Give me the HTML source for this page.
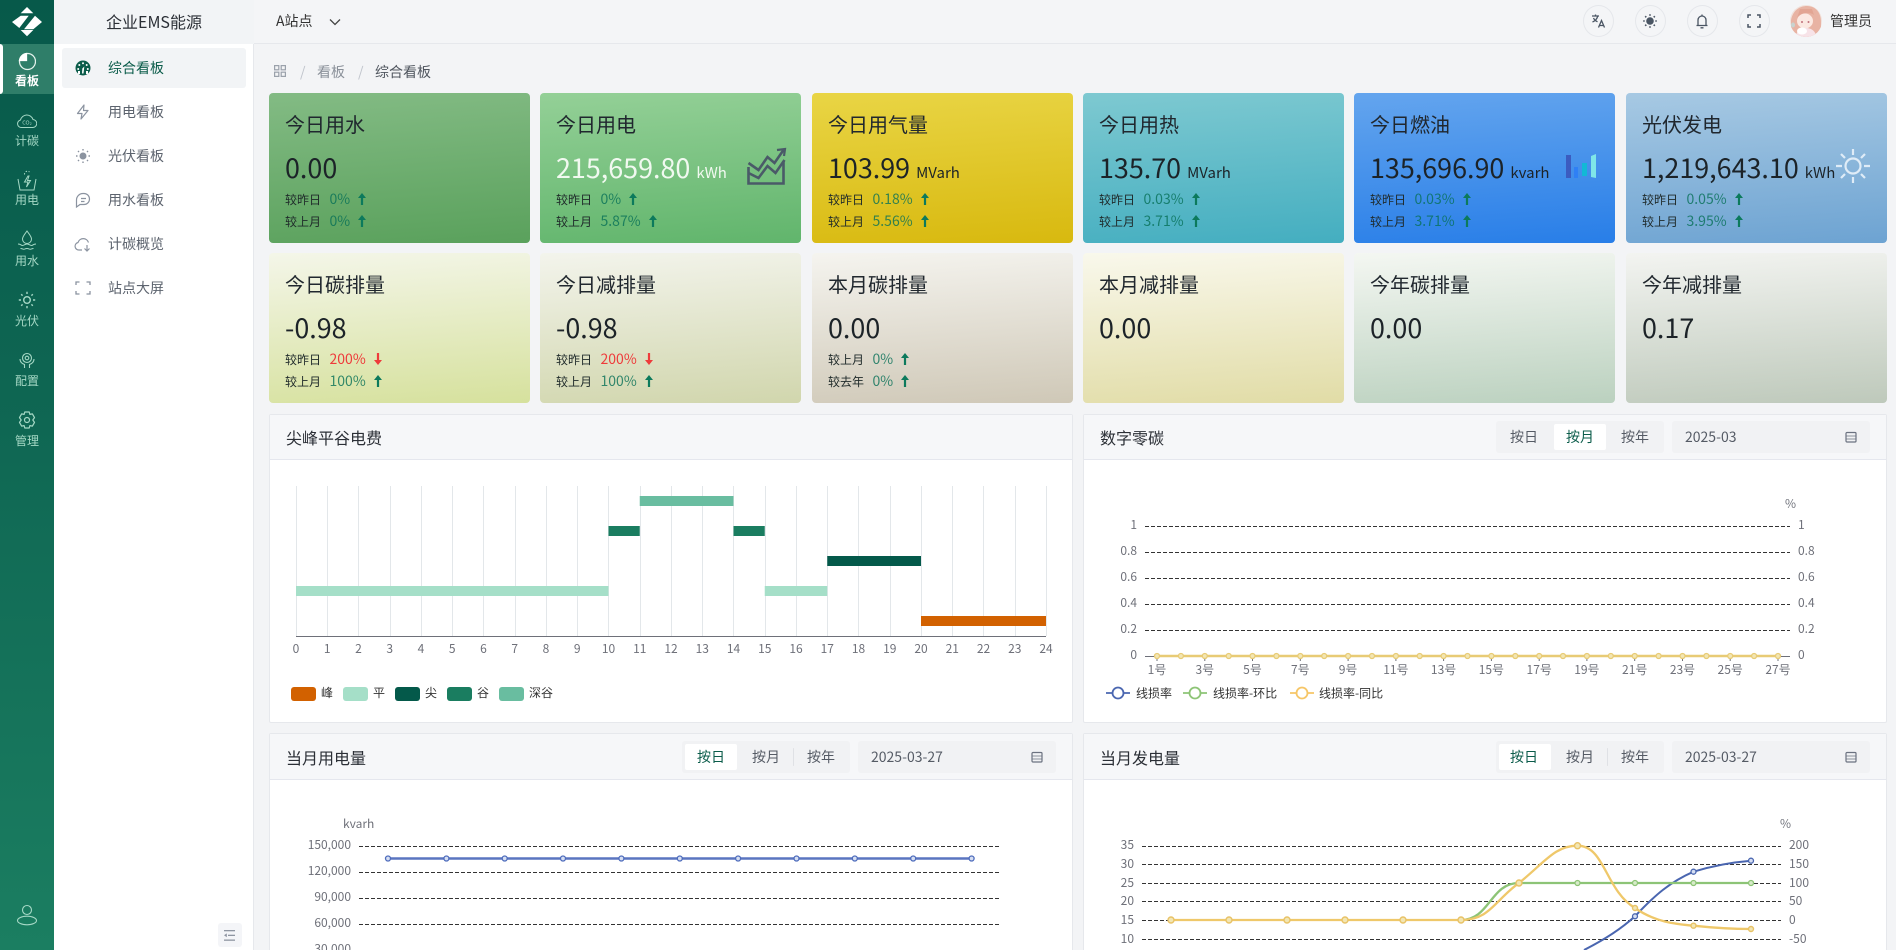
<!DOCTYPE html>
<html lang="zh-CN"><head><meta charset="utf-8"><title>企业EMS能源</title>
<style>
*{box-sizing:border-box;margin:0;padding:0}
html,body{width:1896px;height:950px;overflow:hidden;background:#f3f4f6;font-family:"Noto Sans CJK SC","Liberation Sans",sans-serif;color:#2b2f36}
#w{position:relative;width:1896px;height:950px;overflow:hidden}
.a{position:absolute;white-space:nowrap}
#rail{position:absolute;left:0;top:0;width:54px;height:950px;background:linear-gradient(180deg,#07594a 0%,#0f6753 45%,#1b7e61 100%)}
.ri{position:absolute;left:0;width:54px;text-align:center;font-size:12px;line-height:16px;color:#a5d8c5}
#sub{position:absolute;left:54px;top:0;width:200px;height:950px;background:#fff;border-right:1px solid #e6e8ec}
.mi{position:absolute;left:54px;font-size:14px;line-height:20px;color:#5c636e}
.c{position:absolute;width:261px;height:150px;border-radius:4px}
.t{position:absolute;left:16px;top:19px;font-size:20px;line-height:24px;color:#20272e;white-space:nowrap}
.v{position:absolute;left:16px;top:56px;font-size:26.9px;line-height:36px;color:#1c2328;white-space:nowrap}
.v small{font-size:15px;margin-left:6px}
.r{position:absolute;left:16px;height:20px;line-height:20px;font-size:12px;color:#1f2a2a;white-space:nowrap}
.r b{font-weight:400;font-size:14px;margin-left:8.5px;color:rgba(8,112,88,.8)}
.r b.d{color:#ee3b3b}
.r svg{margin-left:8px;vertical-align:-1px}
.p{position:absolute;background:#fff;border:1px solid #e6e8ec;border-radius:2px}
.ph{position:absolute;left:0;top:0;right:0;height:45px;background:#f6f7f9;border-bottom:1px solid #e5e7ee}
.pt{position:absolute;font-size:16px;line-height:24px;color:#2b2f36;white-space:nowrap}
.g{position:absolute;height:32px;width:168px;background:#f1f2f4;border-radius:3px}
.g i{position:absolute;top:3px;width:52px;height:26px;background:#fff;border-radius:2px}
.g span{position:absolute;top:0;line-height:33px;font-size:14px;color:#555b65;width:40px;text-align:center}
.g span.on{color:#0b5c4a}
.dt{position:absolute;width:198px;height:32px;background:#f1f2f4;border-radius:3px;line-height:33px;font-size:14px;color:#555b65;padding-left:13px}
.dt svg{position:absolute;left:173px;top:10px}
.hb{position:absolute;top:5px;width:31px;height:32px;border:1px solid #e5e7eb;border-radius:50%}
svg text{font-family:"Noto Sans CJK SC","Liberation Sans",sans-serif}
</style></head><body><div id="w">

<!-- top header -->
<div class="a" style="left:254px;top:0;width:1642px;height:44px;background:#f4f5f7;border-bottom:1px solid #e6e8ec"></div>
<div class="a" style="left:276px;top:11px;font-size:14px;line-height:20px;color:#333">A站点</div>
<svg class="a" style="left:328px;top:15px" width="14" height="14" viewBox="0 0 14 14" fill="none" stroke="#444" stroke-width="1.3"><path d="M2 4.5l5 5 5-5"/></svg>
<div class="hb" style="left:1583px"></div><div class="hb" style="left:1635px"></div><div class="hb" style="left:1687px"></div><div class="hb" style="left:1739px"></div>
<svg class="a" style="left:1590px;top:13px" width="16" height="16" viewBox="0 0 16 16" fill="none" stroke="#4a5563" stroke-width="1.3"><path d="M2 3h7M5.5 1.5V3M7.8 3C7 6 5 8 2.500 9M3.500 5c.8 1.800 2.200 3 4 3.800"/><path d="M8.500 14.500l3-7 3 7M9.500 12.500h4"/></svg>
<svg class="a" style="left:1642px;top:13px" width="16" height="16" viewBox="0 0 16 16" fill="#4a5563"><circle cx="8" cy="8" r="3.800"/><g stroke="#4a5563" stroke-width="1.600" stroke-dasharray="1.500 20"><path d="M8 1.200V4M8 14.800V12M1.200 8H4M14.800 8H12M3.200 3.200L5 5M12.800 12.800L11 11M12.800 3.200L11 5M3.200 12.800L5 11"/></g></svg>
<svg class="a" style="left:1694px;top:13px" width="16" height="16" viewBox="0 0 16 16" fill="none" stroke="#4a5563" stroke-width="1.300"><path d="M2.500 12.500h11M4 12.500V7a4 4 0 0 1 8 0v5.500M6.500 14.800h3"/><path d="M8 1.500V3"/></svg>
<svg class="a" style="left:1747px;top:14px" width="14" height="14" viewBox="0 0 14 14" fill="none" stroke="#4a5563" stroke-width="1.500"><path d="M1 4V1h3M10 1h3v3M13 10v3h-3M4 13H1v-3"/></svg>
<svg class="a" style="left:1790px;top:5px" width="32" height="32" viewBox="0 0 32 32"><defs><clipPath id="av"><circle cx="16" cy="16" r="16"/></clipPath></defs><g clip-path="url(#av)"><rect width="32" height="32" fill="#f1e2dc"/><path d="M1 32V15C3 5 10 1 17 1c9 0 14 7 14 16v15z" fill="#e8b3a3"/><ellipse cx="15" cy="16" rx="8" ry="7.500" fill="#fbe9e2"/><path d="M7 13c3-5 12-7 17-3l-2-6H10z" fill="#e2a593"/><circle cx="12" cy="17" r="1" fill="#c0707a"/><circle cx="18.500" cy="17" r="1" fill="#c0707a"/><path d="M6 32c0-6 5-9 10-9s10 3 10 9z" fill="#f7e3e8"/><ellipse cx="12" cy="26" rx="5" ry="3.500" fill="#fff"/><ellipse cx="3" cy="20" rx="2" ry="2.500" fill="#c9d3cf"/></g></svg>
<div class="a" style="left:1830px;top:11px;font-size:14px;line-height:20px;color:#333">管理员</div>

<!-- rail -->
<div id="rail"></div>
<svg class="a" style="left:0;top:0" width="54" height="44" viewBox="0 0 54 44" fill="#fff"><path d="M27 7l6.300 6.300H20.700zM20.700 30h12.600L27 36.300zM12 22l8.700-6.300h8L19.300 28zM42 22l-8.700 7.300H24l11-13.600z"/></svg>
<div class="a" style="left:0;top:44px;width:54px;height:50px;background:#2f7e69"></div>
<div class="a" style="left:0;top:44px;width:3px;height:50px;background:#fff;border-radius:0 3px 3px 0"></div>
<svg class="a" style="left:18px;top:51px" width="18" height="20" viewBox="0 0 18 20" fill="none" stroke="#e4f2ec" stroke-width="1.300"><circle cx="9.500" cy="10.500" r="8"/><path d="M1.500 9.500A8 8 0 0 1 8.500 2.500V9.500z" fill="#fff" stroke="#fff"/></svg>
<div class="ri" style="top:73px;color:#fff;font-weight:700">看板</div>

<svg class="a" style="left:17px;top:112px" width="20" height="17" viewBox="0 0 20 17" fill="none" stroke="#a5d8c5" stroke-width="1"><path d="M5 15.500H4.500A3.800 3.800 0 0 1 3.500 8 6.500 6.500 0 0 1 16 7.500 4 4 0 0 1 15.500 15.500z"/><text x="10" y="12.700" font-size="5.500" fill="#a5d8c5" stroke="none" text-anchor="middle">CO₂</text></svg>
<div class="ri" style="top:133px">计碳</div>
<svg class="a" style="left:17px;top:169px" width="20" height="22" viewBox="0 0 20 22" fill="none" stroke="#a5d8c5" stroke-width="1"><path d="M1 10l2 11h14l2-11"/><path d="M11 7L7.500 13H11l-1.500 5 4-6.500h-3L12 7z"/><path d="M7.500 5.500a3 3 0 0 1 5-2.500" stroke-dasharray="1.500 1.500"/></svg>
<div class="ri" style="top:192px">用电</div>
<svg class="a" style="left:17px;top:229px" width="20" height="22" viewBox="0 0 20 22" fill="none" stroke="#a5d8c5" stroke-width="1"><path d="M10 2c2.500 3.500 4.500 5.500 4.500 8a4.500 4.500 0 0 1-9 0c0-2.500 2-4.500 4.500-8z"/><path d="M1 15c3 0 3 1.500 4.500 1.500S8 15 10 15s3 1.500 4.500 1.500S16 15 19 15M3.500 19.500c2 0 2 .8 3.200 .8s1.500-.8 3.300-.8 2 .8 3.300.8 1.200-.8 3.200-.8"/></svg>
<div class="ri" style="top:253px">用水</div>
<svg class="a" style="left:18px;top:291px" width="18" height="18" viewBox="0 0 18 18" fill="none" stroke="#a5d8c5" stroke-width="1.400"><circle cx="9" cy="9" r="3.300"/><path d="M9 .8V3M9 15v2.200M.8 9H3M15 9h2.200M3.200 3.200l1.400 1.400M13.400 13.400l1.400 1.400M14.800 3.200l-1.400 1.400M4.600 13.400l-1.400 1.400"/></svg>
<div class="ri" style="top:313px">光伏</div>
<svg class="a" style="left:19px;top:352px" width="16" height="17" viewBox="0 0 16 17" fill="none" stroke="#a5d8c5" stroke-width="1.100"><circle cx="8" cy="6" r="4.500"/><circle cx="8" cy="6" r="1.800"/><path d="M1 7c0 4 3 5 4.500 5.500V16M15 7c0 4-3 5-4.500 5.500V16"/></svg>
<div class="ri" style="top:373px">配置</div>
<svg class="a" style="left:18px;top:411px" width="18" height="18" viewBox="0 0 18 18" fill="none" stroke="#a5d8c5" stroke-width="1.200"><path d="M6.800 1h4.400l.7 2.400 2.500-.5 2.100 3.700L14.800 9l1.700 2.400-2.100 3.700-2.500-.5-.7 2.400H6.800l-.7-2.400-2.500.5-2.100-3.700L3.200 9 1.500 6.600l2.100-3.700 2.500.5z" stroke-linejoin="round"/><circle cx="9" cy="9" r="2.500"/></svg>
<div class="ri" style="top:433px">管理</div>
<svg class="a" style="left:16px;top:904px" width="22" height="22" viewBox="0 0 22 22" fill="none" stroke="#a5d8c5" stroke-width="1.100"><circle cx="11" cy="6" r="4.500"/><ellipse cx="11" cy="16.500" rx="9.500" ry="4.300"/></svg>

<!-- sub menu -->
<div id="sub"></div>
<div class="a" style="left:54px;top:0;width:200px;height:44px;background:#f2f4f6;text-align:center;font-size:16px;line-height:43px;color:#2b2f36">企业EMS能源</div>
<div class="a" style="left:62px;top:48px;width:184px;height:40px;background:#f2f4f6;border-radius:3px"></div>
<svg class="a" style="left:75px;top:60px" width="16" height="16" viewBox="0 0 16 16"><circle cx="8" cy="8" r="7.500" fill="#0b5c4a"/><g fill="#fff"><circle cx="8" cy="3.300" r="1"/><circle cx="4.300" cy="5" r="1"/><circle cx="11.700" cy="5" r="1"/><circle cx="3.200" cy="9" r="1"/><circle cx="12.800" cy="9" r="1"/><path d="M7 13.500l.3-5 2-2-.8 7z"/><rect x="3" y="11" width="2" height="3"/><rect x="11" y="11" width="2" height="3"/></g></svg>
<div class="mi" style="left:108px;top:58px;color:#0b5c4a">综合看板</div>
<svg class="a" style="left:76px;top:104px" width="14" height="16" viewBox="0 0 14 16" fill="none" stroke="#8b93a0" stroke-width="1.200"><path d="M8 1L1.500 9.500H6L5 15l7-8.500H7.500z" stroke-linejoin="round"/></svg>
<div class="mi" style="left:108px;top:102px">用电看板</div>
<svg class="a" style="left:76px;top:149px" width="14" height="14" viewBox="0 0 14 14" fill="#8b93a0"><circle cx="7" cy="7" r="3.500"/><g stroke="#8b93a0" stroke-width="1.400"><path d="M7 0v1.500M7 12.500V14M0 7h1.500M12.500 7H14M2 2l1 1M11 11l1 1M12 2l-1 1M3 11l-1 1"/></g></svg>
<div class="mi" style="left:108px;top:146px">光伏看板</div>
<svg class="a" style="left:75px;top:192px" width="16" height="16" viewBox="0 0 16 16" fill="none" stroke="#8b93a0" stroke-width="1.200"><path d="M8 1.500h1a5.500 5.500 0 0 1 0 11H5L1.500 15V8A6.500 6.500 0 0 1 8 1.500z"/><path d="M6 6.500h5M6 9.500h3.500"/></svg>
<div class="mi" style="left:108px;top:190px">用水看板</div>
<svg class="a" style="left:74px;top:236px" width="18" height="16" viewBox="0 0 18 16" fill="none" stroke="#8b93a0" stroke-width="1.200"><path d="M8 14H5A3.800 3.800 0 0 1 4 6.500 5.500 5.500 0 0 1 14.500 6.500M13 9v5.500M10.500 12.500l2.500 2.500 2.500-2.500"/></svg>
<div class="mi" style="left:108px;top:234px">计碳概览</div>
<svg class="a" style="left:75px;top:281px" width="16" height="14" viewBox="0 0 16 14" fill="none" stroke="#8b93a0" stroke-width="1.300"><path d="M1 4V1h3.500M11.500 1H15v3M15 10v3h-3.500M4.500 13H1v-3"/></svg>
<div class="mi" style="left:108px;top:278px">站点大屏</div>
<div class="a" style="left:218px;top:923px;width:24px;height:24px;background:#f4f5f8;border-radius:3px"></div>
<svg class="a" style="left:224px;top:930px" width="12" height="11" viewBox="0 0 12 11" fill="#8e95a1"><rect width="11" height="1.300"/><rect y="9.500" width="11" height="1.300"/><rect x="4" y="4.700" width="7" height="1.300"/><path d="M0 5.300L2.800 3.400v3.800z"/></svg>

<!-- breadcrumb -->
<svg class="a" style="left:274px;top:65px" width="12" height="12" viewBox="0 0 12 12" fill="none" stroke="#9aa1ab" stroke-width="1.200"><rect x=".6" y=".6" width="4.200" height="4.200"/><rect x="7.200" y=".6" width="4.200" height="4.200"/><rect x=".6" y="7.200" width="4.200" height="4.200"/><rect x="7.200" y="7.200" width="4.200" height="4.200"/></svg>
<div class="a" style="left:300px;top:62px;font-size:14px;line-height:20px;color:#c0c4cc">/</div>
<div class="a" style="left:317px;top:62px;font-size:14px;line-height:20px;color:#8a9099">看板</div>
<div class="a" style="left:358px;top:62px;font-size:14px;line-height:20px;color:#c0c4cc">/</div>
<div class="a" style="left:375px;top:62px;font-size:14px;line-height:20px;color:#50565f">综合看板</div>

<!-- arrow symbols -->
<svg width="0" height="0" style="position:absolute"><defs>
<symbol id="up" viewBox="0 0 8 12"><path d="M4 0L8 5H5.100V12H2.900V5H0z" fill="#0c7a5c"/></symbol>
<symbol id="dn" viewBox="0 0 8 12"><path d="M4 12L0 7H2.900V0H5.100V7H8z" fill="#ee3b3b"/></symbol>
</defs></svg>

<!-- row 1 cards -->
<div class="c" style="left:269px;top:93px;background:linear-gradient(176deg,#83bb84,#5aa15c)">
<div class="t">今日用水</div><div class="v">0.00</div>
<div class="r" style="top:96px">较昨日<b>0%</b><svg width="8" height="12"><use href="#up"/></svg></div>
<div class="r" style="top:118px">较上月<b>0%</b><svg width="8" height="12"><use href="#up"/></svg></div></div>

<div class="c" style="left:540px;top:93px;background:linear-gradient(176deg,#94d097,#61b56c)">
<div class="t">今日用电</div><div class="v" style="color:#f1f9f0">215,659.80<small>kWh</small></div>
<div class="r" style="top:96px">较昨日<b>0%</b><svg width="8" height="12"><use href="#up"/></svg></div>
<div class="r" style="top:118px">较上月<b>5.87%</b><svg width="8" height="12"><use href="#up"/></svg></div>
<svg class="a" style="left:207px;top:54px" width="40" height="40" viewBox="0 0 40 40" fill="none" stroke="#4a5a68" stroke-width="2.600"><path d="M1.500 20v16.500h35V14"/><path d="M1.500 26l10 5 9-12 8 7 9-13"/><path d="M1.500 16l10 7 9-13 7 6 9-13"/><path d="M30 3l8-1-1 7" stroke-width="2.200"/></svg></div>

<div class="c" style="left:812px;top:93px;background:linear-gradient(176deg,#e9d545,#d8b90f)">
<div class="t">今日用气量</div><div class="v">103.99<small>MVarh</small></div>
<div class="r" style="top:96px">较昨日<b>0.18%</b><svg width="8" height="12"><use href="#up"/></svg></div>
<div class="r" style="top:118px">较上月<b>5.56%</b><svg width="8" height="12"><use href="#up"/></svg></div></div>

<div class="c" style="left:1083px;top:93px;background:linear-gradient(176deg,#7ec9d1,#44aec0)">
<div class="t">今日用热</div><div class="v">135.70<small>MVarh</small></div>
<div class="r" style="top:96px">较昨日<b>0.03%</b><svg width="8" height="12"><use href="#up"/></svg></div>
<div class="r" style="top:118px">较上月<b>3.71%</b><svg width="8" height="12"><use href="#up"/></svg></div></div>

<div class="c" style="left:1354px;top:93px;background:linear-gradient(176deg,#64a5ee,#287ee8)">
<div class="t">今日燃油</div><div class="v">135,696.90<small>kvarh</small></div>
<div class="r" style="top:96px">较昨日<b>0.03%</b><svg width="8" height="12"><use href="#up"/></svg></div>
<div class="r" style="top:118px">较上月<b>3.71%</b><svg width="8" height="12"><use href="#up"/></svg></div>
<svg class="a" style="left:212px;top:61px" width="30" height="25" viewBox="0 0 30 25"><rect x="0" y="1" width="5" height="23" fill="#3b5cc0"/><rect x="8" y="13" width="4" height="11" fill="#2f80f5"/><rect x="16" y="9" width="5" height="13" fill="#12b8d6"/><path d="M25 2l5-2v24l-5-1z" fill="#7fe6e8"/></svg></div>

<div class="c" style="left:1626px;top:93px;background:linear-gradient(176deg,#a7c9e3,#6da3d2)">
<div class="t">光伏发电</div><div class="v">1,219,643.10<small>kWh</small></div>
<div class="r" style="top:96px">较昨日<b>0.05%</b><svg width="8" height="12"><use href="#up"/></svg></div>
<div class="r" style="top:118px">较上月<b>3.95%</b><svg width="8" height="12"><use href="#up"/></svg></div>
<svg class="a" style="left:209px;top:55px" width="36" height="36" viewBox="0 0 36 36" fill="none" stroke="#dfecf7" stroke-width="2.200"><circle cx="18" cy="18" r="7.500"/><path d="M18 1v6M18 29v6M1 18h6M29 18h6M6 6l4 4M26 26l4 4M30 6l-4 4M10 26l-4 4"/></svg></div>

<!-- row 2 cards -->
<div class="c" style="left:269px;top:253px;background:linear-gradient(176deg,#f4f6e9,#d6e19d)">
<div class="t">今日碳排量</div><div class="v">-0.98</div>
<div class="r" style="top:96px">较昨日<b class="d">200%</b><svg width="8" height="12"><use href="#dn"/></svg></div>
<div class="r" style="top:118px">较上月<b>100%</b><svg width="8" height="12"><use href="#up"/></svg></div></div>

<div class="c" style="left:540px;top:253px;background:linear-gradient(176deg,#f3f4ec,#d1d6ad)">
<div class="t">今日减排量</div><div class="v">-0.98</div>
<div class="r" style="top:96px">较昨日<b class="d">200%</b><svg width="8" height="12"><use href="#dn"/></svg></div>
<div class="r" style="top:118px">较上月<b>100%</b><svg width="8" height="12"><use href="#up"/></svg></div></div>

<div class="c" style="left:812px;top:253px;background:linear-gradient(176deg,#f5f4ef,#cfc8b7)">
<div class="t">本月碳排量</div><div class="v">0.00</div>
<div class="r" style="top:96px">较上月<b>0%</b><svg width="8" height="12"><use href="#up"/></svg></div>
<div class="r" style="top:118px">较去年<b>0%</b><svg width="8" height="12"><use href="#up"/></svg></div></div>

<div class="c" style="left:1083px;top:253px;background:linear-gradient(176deg,#f9f8ec,#e1dca6)">
<div class="t">本月减排量</div><div class="v">0.00</div></div>

<div class="c" style="left:1354px;top:253px;background:linear-gradient(176deg,#f4f7f2,#bbd1bf)">
<div class="t">今年碳排量</div><div class="v">0.00</div></div>

<div class="c" style="left:1626px;top:253px;background:linear-gradient(176deg,#f3f4f1,#bec9bb)">
<div class="t">今年减排量</div><div class="v">0.17</div></div>

<!-- panels -->
<div class="p" style="left:269px;top:414px;width:804px;height:309px"><div class="ph"></div></div>
<div class="p" style="left:1083px;top:414px;width:804px;height:309px"><div class="ph"></div></div>
<div class="p" style="left:269px;top:733px;width:804px;height:230px"><div class="ph" style="height:46px"></div></div>
<div class="p" style="left:1083px;top:733px;width:804px;height:230px"><div class="ph" style="height:46px"></div></div>

<div class="pt" style="left:286px;top:425px">尖峰平谷电费</div>
<div class="pt" style="left:1100px;top:425px">数字零碳</div>
<div class="pt" style="left:286px;top:745px">当月用电量</div>
<div class="pt" style="left:1100px;top:745px">当月发电量</div>

<div class="g" style="left:1496px;top:421px"><i style="left:58px"></i><span style="left:8px">按日</span><span class="on" style="left:64px">按月</span><span style="left:119px">按年</span></div>
<div class="dt" style="left:1672px;top:421px">2025-03<svg width="12" height="12" viewBox="0 0 12 12" fill="none" stroke="#6b7280" stroke-width="1.200"><rect x="1" y="1.500" width="10" height="9.500" rx="1"/><path d="M1 5h10M1 8h10" stroke-width=".8"/></svg></div>

<div class="g" style="left:682px;top:741px"><i style="left:3px"></i><span class="on" style="left:9px">按日</span><span style="left:64px">按月</span><span style="left:119px">按年</span><i style="left:111px;top:7px;width:1px;height:18px;background:#dfe1e5"></i></div>
<div class="dt" style="left:858px;top:741px">2025-03-27<svg width="12" height="12" viewBox="0 0 12 12" fill="none" stroke="#6b7280" stroke-width="1.200"><rect x="1" y="1.500" width="10" height="9.500" rx="1"/><path d="M1 5h10M1 8h10" stroke-width=".8"/></svg></div>

<div class="g" style="left:1496px;top:741px"><i style="left:3px"></i><span class="on" style="left:8px">按日</span><span style="left:64px">按月</span><span style="left:119px">按年</span><i style="left:111px;top:7px;width:1px;height:18px;background:#dfe1e5"></i></div>
<div class="dt" style="left:1672px;top:741px">2025-03-27<svg width="12" height="12" viewBox="0 0 12 12" fill="none" stroke="#6b7280" stroke-width="1.200"><rect x="1" y="1.500" width="10" height="9.500" rx="1"/><path d="M1 5h10M1 8h10" stroke-width=".8"/></svg></div>

<!-- charts -->
<svg class="a" style="left:0;top:0" width="1896" height="950" viewBox="0 0 1896 950" font-size="12" fill="#6e7079">
<!-- chart 1 -->
<path stroke="#e3e7ea" stroke-width="1" fill="none" d="M296.500 486V636M327.500 486V636M358.500 486V636M390.500 486V636M421.500 486V636M452.500 486V636M483.500 486V636M515.500 486V636M546.500 486V636M577.500 486V636M608.500 486V636M640.500 486V636M671.500 486V636M702.500 486V636M733.500 486V636M765.500 486V636M796.500 486V636M827.500 486V636M858.500 486V636M890.500 486V636M921.500 486V636M952.500 486V636M983.500 486V636M1015.500 486V636M1046.500 486V636"/>
<path stroke="#6e7079" d="M296 636.500H1046"/>
<rect x="296" y="586" width="312.500" height="10" fill="#a5dfc8"/><rect x="764.750" y="586" width="62.500" height="10" fill="#a5dfc8"/>
<rect x="608.500" y="526" width="31.250" height="10" fill="#1a7d60"/><rect x="733.500" y="526" width="31.250" height="10" fill="#1a7d60"/>
<rect x="639.750" y="496" width="93.750" height="10" fill="#69bda0"/>
<rect x="827.250" y="556" width="93.750" height="10" fill="#04594a"/>
<rect x="921" y="616" width="125" height="10" fill="#d26100"/>
<g text-anchor="middle">
<text x="296" y="653">0</text><text x="327.250" y="653">1</text><text x="358.500" y="653">2</text><text x="389.750" y="653">3</text><text x="421" y="653">4</text><text x="452.250" y="653">5</text><text x="483.500" y="653">6</text><text x="514.750" y="653">7</text><text x="546" y="653">8</text><text x="577.250" y="653">9</text><text x="608.500" y="653">10</text><text x="639.750" y="653">11</text><text x="671" y="653">12</text><text x="702.250" y="653">13</text><text x="733.500" y="653">14</text><text x="764.750" y="653">15</text><text x="796" y="653">16</text><text x="827.250" y="653">17</text><text x="858.500" y="653">18</text><text x="889.750" y="653">19</text><text x="921" y="653">20</text><text x="952.250" y="653">21</text><text x="983.500" y="653">22</text><text x="1014.750" y="653">23</text><text x="1046" y="653">24</text>
</g>
<rect x="291" y="687" width="25" height="14" rx="3" fill="#d26100"/><rect x="343" y="687" width="25" height="14" rx="3" fill="#a5dfc8"/><rect x="395" y="687" width="25" height="14" rx="3" fill="#04594a"/><rect x="447" y="687" width="25" height="14" rx="3" fill="#1a7d60"/><rect x="499" y="687" width="25" height="14" rx="3" fill="#69bda0"/>
<g fill="#333"><text x="321" y="697">峰</text><text x="373" y="697">平</text><text x="425" y="697">尖</text><text x="477" y="697">谷</text><text x="529" y="697">深谷</text></g>

<!-- chart 2 -->
<path stroke="#333" stroke-dasharray="4 2" fill="none" d="M1145 526.500H1790M1145 552.500H1790M1145 578.500H1790M1145 604.500H1790M1145 630.500H1790"/>
<path stroke="#6e7079" d="M1145 656.500H1790M1157 656V661M1204.800 656V661M1252.500 656V661M1300.300 656V661M1348.100 656V661M1395.900 656V661M1443.600 656V661M1491.400 656V661M1539.200 656V661M1586.900 656V661M1634.700 656V661M1682.500 656V661M1730.200 656V661M1778 656V661"/>
<g text-anchor="end"><text x="1137" y="529">1</text><text x="1137" y="555">0.8</text><text x="1137" y="581">0.6</text><text x="1137" y="607">0.4</text><text x="1137" y="633">0.2</text><text x="1137" y="659">0</text></g>
<text x="1798" y="529">1</text><text x="1798" y="555">0.8</text><text x="1798" y="581">0.6</text><text x="1798" y="607">0.4</text><text x="1798" y="633">0.2</text><text x="1798" y="659">0</text>
<g text-anchor="middle"><text x="1157" y="674">1号</text><text x="1204.800" y="674">3号</text><text x="1252.500" y="674">5号</text><text x="1300.300" y="674">7号</text><text x="1348.100" y="674">9号</text><text x="1395.900" y="674">11号</text><text x="1443.600" y="674">13号</text><text x="1491.400" y="674">15号</text><text x="1539.200" y="674">17号</text><text x="1586.900" y="674">19号</text><text x="1634.700" y="674">21号</text><text x="1682.500" y="674">23号</text><text x="1730.200" y="674">25号</text><text x="1778" y="674">27号</text></g>
<path stroke="#e8cb75" stroke-width="2.500" d="M1157 656H1778"/>
<g fill="#f2e6b4" stroke="#e8cb75" stroke-width="1.300"><circle cx="1157" cy="656" r="2.500"/><circle cx="1180.900" cy="656" r="2.500"/><circle cx="1204.800" cy="656" r="2.500"/><circle cx="1228.700" cy="656" r="2.500"/><circle cx="1252.500" cy="656" r="2.500"/><circle cx="1276.400" cy="656" r="2.500"/><circle cx="1300.300" cy="656" r="2.500"/><circle cx="1324.200" cy="656" r="2.500"/><circle cx="1348.100" cy="656" r="2.500"/><circle cx="1372" cy="656" r="2.500"/><circle cx="1395.900" cy="656" r="2.500"/><circle cx="1419.700" cy="656" r="2.500"/><circle cx="1443.600" cy="656" r="2.500"/><circle cx="1467.500" cy="656" r="2.500"/><circle cx="1491.400" cy="656" r="2.500"/><circle cx="1515.300" cy="656" r="2.500"/><circle cx="1539.200" cy="656" r="2.500"/><circle cx="1563" cy="656" r="2.500"/><circle cx="1586.900" cy="656" r="2.500"/><circle cx="1610.800" cy="656" r="2.500"/><circle cx="1634.700" cy="656" r="2.500"/><circle cx="1658.600" cy="656" r="2.500"/><circle cx="1682.500" cy="656" r="2.500"/><circle cx="1706.400" cy="656" r="2.500"/><circle cx="1730.200" cy="656" r="2.500"/><circle cx="1754.100" cy="656" r="2.500"/><circle cx="1778" cy="656" r="2.500"/></g>
<text x="1785" y="508">%</text>
<g fill="#fff" stroke-width="1.800"><path stroke="#4a66b0" d="M1106 693H1130"/><circle cx="1118" cy="693" r="5.500" stroke="#4a66b0"/><path stroke="#8dc476" d="M1183 693H1207"/><circle cx="1195" cy="693" r="5.500" stroke="#8dc476"/><path stroke="#f6c667" d="M1290 693H1314"/><circle cx="1302" cy="693" r="5.500" stroke="#f6c667"/></g>
<g fill="#333"><text x="1136" y="697.500">线损率</text><text x="1213" y="697.500">线损率-环比</text><text x="1319" y="697.500">线损率-同比</text></g>

<!-- chart 3 -->
<text x="343" y="828">kvarh</text>
<path stroke="#333" stroke-dasharray="4 2" fill="none" d="M359 846.500H999M359 872.500H999M359 898.500H999M359 924.500H999M359 950.500H999"/>
<g text-anchor="end"><text x="351" y="849">150,000</text><text x="351" y="875">120,000</text><text x="351" y="901">90,000</text><text x="351" y="927">60,000</text><text x="351" y="953">30,000</text></g>
<path stroke="#5a75c0" stroke-width="2.500" d="M388 858.500H971.600"/>
<g fill="#d5def2" stroke="#4e6cbc" stroke-width="1.300"><circle cx="388" cy="858.500" r="2.500"/><circle cx="446.400" cy="858.500" r="2.500"/><circle cx="504.700" cy="858.500" r="2.500"/><circle cx="563" cy="858.500" r="2.500"/><circle cx="621.400" cy="858.500" r="2.500"/><circle cx="679.800" cy="858.500" r="2.500"/><circle cx="738.100" cy="858.500" r="2.500"/><circle cx="796.500" cy="858.500" r="2.500"/><circle cx="854.800" cy="858.500" r="2.500"/><circle cx="913.200" cy="858.500" r="2.500"/><circle cx="971.600" cy="858.500" r="2.500"/></g>

<!-- chart 4 -->
<text x="1780" y="828">%</text>
<path stroke="#333" stroke-dasharray="4 2" fill="none" d="M1142 846.500H1781M1142 864.500H1781M1142 883.500H1781M1142 901.500H1781M1142 920.500H1781M1142 939.500H1781"/>
<g text-anchor="end"><text x="1134" y="849">35</text><text x="1134" y="868">30</text><text x="1134" y="887">25</text><text x="1134" y="905">20</text><text x="1134" y="924">15</text><text x="1134" y="943">10</text></g>
<text x="1789" y="849">200</text><text x="1789" y="868">150</text><text x="1789" y="887">100</text><text x="1789" y="905">50</text><text x="1789" y="924">0</text><text x="1789" y="943">-50</text>
<g fill="none" stroke-width="2">
<path stroke="#4a66b0" d="M1584 950C1600 942 1620 930 1635 916.300C1655 895 1670 882 1693.500 871.700C1715 865 1735 862 1751 860.700"/>
<path stroke="#8dc476" stroke-width="2.300" d="M1461 920C1490 920 1490 883 1519 883H1751"/>
<path stroke="#efc86a" stroke-width="2.300" d="M1171 920H1461C1490 920 1495 900 1519 883C1545 862 1555 845.700 1577.500 845.700C1605 845.700 1605 890 1635 908C1655 922 1675 924 1693.500 925.700C1715 928 1735 929 1751 929"/>
</g>
<g fill="#f2e6b4" stroke="#e8c266" stroke-width="1.400"><circle cx="1171" cy="920" r="3"/><circle cx="1229" cy="920" r="3"/><circle cx="1287" cy="920" r="3"/><circle cx="1345" cy="920" r="3"/><circle cx="1403" cy="920" r="3"/><circle cx="1461" cy="920" r="3"/><circle cx="1519" cy="883" r="3"/><circle cx="1577.500" cy="845.700" r="3"/><circle cx="1635" cy="908" r="2.500"/><circle cx="1693.500" cy="925.700" r="2.500"/><circle cx="1751" cy="929" r="2.500"/></g>
<g fill="#d7ebc9" stroke="#8dc476" stroke-width="1.300"><circle cx="1577.500" cy="883" r="2.500"/><circle cx="1635" cy="883" r="2.500"/><circle cx="1693.500" cy="883" r="2.500"/><circle cx="1751" cy="883" r="2.500"/></g>
<g fill="#d5def2" stroke="#4a66b0" stroke-width="1.300"><circle cx="1635" cy="916.300" r="2.500"/><circle cx="1693.500" cy="871.700" r="2.500"/><circle cx="1751" cy="860.700" r="2.500"/></g>
</svg>
</div></body></html>
